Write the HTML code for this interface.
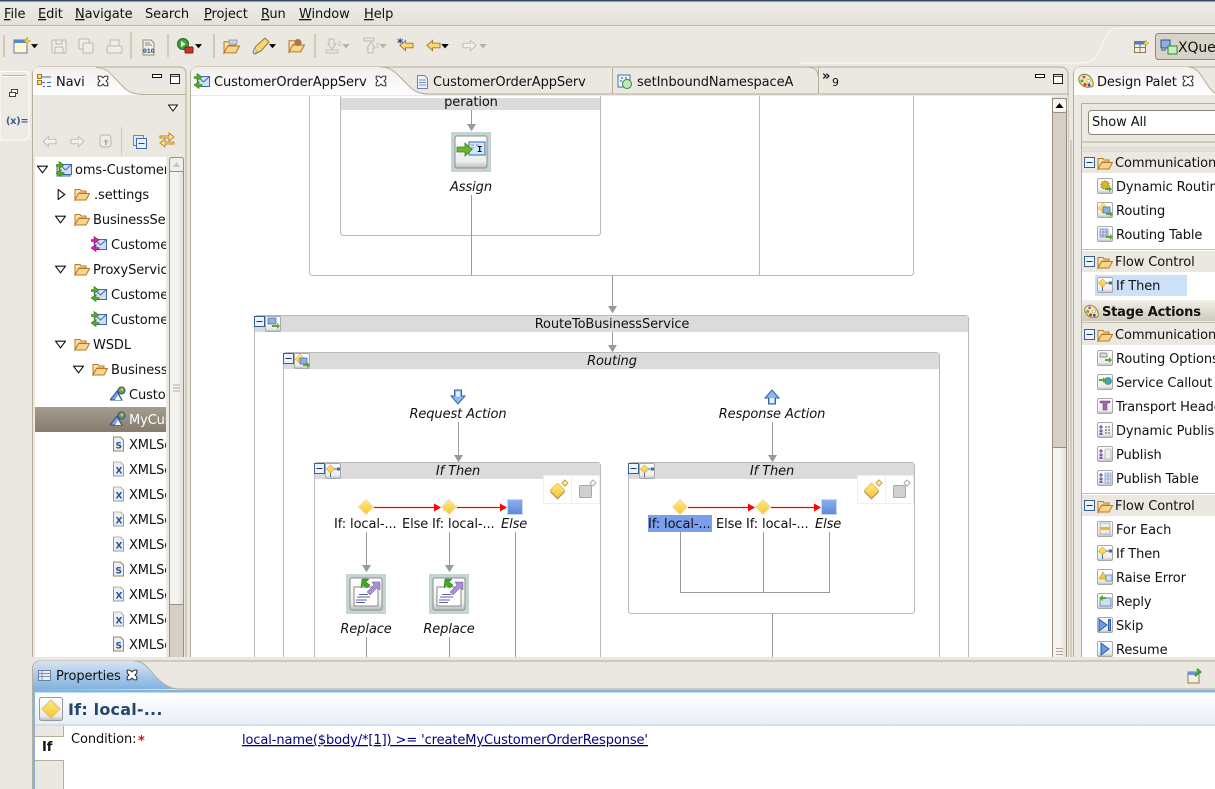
<!DOCTYPE html>
<html><head><meta charset="utf-8"><title>Workshop</title>
<style>
html,body{margin:0;padding:0;background:#ebe8e2;width:1215px;height:789px;overflow:hidden}
svg{display:block;font-family:"DejaVu Sans",sans-serif;font-size:13px;fill:#111;letter-spacing:-.1px}
text{white-space:pre}
.i{font-style:italic}
.u{text-decoration:underline}
.m{text-anchor:middle}
</style></head><body>
<svg xmlns="http://www.w3.org/2000/svg" width="1215" height="789" viewBox="0 0 1215 789">
<defs>
<linearGradient id="gm" x1="0" y1="0" x2="0" y2="1"><stop offset="0" stop-color="#eeece7"/><stop offset="1" stop-color="#e4e1da"/></linearGradient>
<linearGradient id="gt" x1="0" y1="0" x2="0" y2="1"><stop offset="0" stop-color="#f1efeb"/><stop offset="1" stop-color="#fff"/></linearGradient>
<linearGradient id="gs" x1="0" y1="0" x2="0" y2="1"><stop offset="0" stop-color="#a59c8e"/><stop offset="1" stop-color="#857c6e"/></linearGradient>
<linearGradient id="gb" x1="0" y1="0" x2="0" y2="1"><stop offset="0" stop-color="#d5e4f3"/><stop offset="1" stop-color="#7fb0de"/></linearGradient>
<linearGradient id="gw" x1="0" y1="0" x2="0" y2="1"><stop offset="0" stop-color="#fff"/><stop offset="1" stop-color="#e8eff7"/></linearGradient>
<linearGradient id="gh" x1="0" y1="0" x2="1" y2="0"><stop offset="0" stop-color="#f3f1ed"/><stop offset=".5" stop-color="#f7f5f2"/><stop offset="1" stop-color="#e2dfd8"/></linearGradient>
<linearGradient id="gd" x1="0" y1="0" x2="0" y2="1"><stop offset="0" stop-color="#ffe98a"/><stop offset="1" stop-color="#f7c531"/></linearGradient>
<linearGradient id="gq" x1="0" y1="0" x2="0" y2="1"><stop offset="0" stop-color="#8db1ee"/><stop offset="1" stop-color="#5c88d8"/></linearGradient>
<linearGradient id="gbtn" x1="0" y1="0" x2="0" y2="1"><stop offset="0" stop-color="#fff"/><stop offset=".8" stop-color="#ececec"/><stop offset="1" stop-color="#bbb"/></linearGradient>
<linearGradient id="gsa" x1="0" y1="0" x2="0" y2="1"><stop offset="0" stop-color="#f2efe9"/><stop offset="1" stop-color="#cfc9bc"/></linearGradient>
<clipPath id="cn"><rect x="35" y="157" width="131" height="500"/></clipPath>
<clipPath id="cp"><rect x="1082" y="140" width="133" height="517"/></clipPath>
<clipPath id="cd"><rect x="190" y="96" width="861" height="561"/></clipPath>
<symbol id="folder" viewBox="0 0 16 16"><path d="M1 3.500h5l1 1.500h5v2H5L1 14z" fill="#fbe3b0" stroke="#b37a25"/><path d="M1 14l3.500-6.500H15.500L12 14z" fill="#fad48b" stroke="#b37a25"/></symbol>
<symbol id="mailg" viewBox="0 0 16 16"><rect x="3.500" y="3.500" width="12" height="10" fill="#cfe0f6" stroke="#3f66a8"/><path d="M3.500 3.500l6 5.500 6-5.500" fill="none" stroke="#3f66a8"/><path d="M0 3.500h3V0.500L8 4 3 7.500V5.500H0z" fill="#5aa82b" stroke="#2f7a18" stroke-width=".6"/><path d="M8 11.500H5V8.500L0 12 5 15.500V13.500h3z" fill="#5aa82b" stroke="#2f7a18" stroke-width=".6"/></symbol>
<symbol id="mailm" viewBox="0 0 16 16"><rect x="3.500" y="3.500" width="12" height="10" fill="#cfe0f6" stroke="#3f66a8"/><path d="M3.500 3.500l6 5.500 6-5.500" fill="none" stroke="#3f66a8"/><path d="M0 3.500h3V0.500L8 4 3 7.500V5.500H0z" fill="#d025a8" stroke="#8a1070" stroke-width=".6"/><path d="M8 11.500H5V8.500L0 12 5 15.500V13.500h3z" fill="#d025a8" stroke="#8a1070" stroke-width=".6"/></symbol>
<symbol id="wsdl" viewBox="0 0 16 16"><path d="M0 14L7 5l5 9z" fill="#7d9fdb" stroke="#2b4f93"/><path d="M5 14l3-5 3 5z" fill="#fff"/><circle cx="11.500" cy="4.500" r="3.500" fill="#6da33f" stroke="#2b4f93"/><circle cx="12" cy="3.500" r="1.300" fill="#e8c93a"/></symbol>
<symbol id="fx" viewBox="0 0 16 16"><path d="M3.500 1h7l3 3v11h-10z" fill="#e9eff8" stroke="#8b9db8"/><path d="M3.500 1h7l3 3" fill="none" stroke="#c9b88a"/><text x="5.500" y="12.500" style="font:bold 9px 'DejaVu Sans'" fill="#2d4f8a">X</text></symbol>
<symbol id="fs" viewBox="0 0 16 16"><path d="M3.500 1h7l3 3v11h-10z" fill="#e9eff8" stroke="#a3884a"/><text x="5.500" y="12.500" style="font:bold 9px 'DejaVu Sans'" fill="#2d4f8a">S</text></symbol>
<symbol id="btn" viewBox="0 0 16 16"><rect x=".5" y=".5" width="15" height="15" rx="1.500" fill="url(#gbtn)" stroke="#a9a9a9"/></symbol>
<symbol id="minus" viewBox="0 0 11 11"><rect x=".5" y=".5" width="10" height="10" fill="#edf3fb" stroke="#3c5f93"/><path d="M2.500 5.500h6" stroke="#17365f" stroke-width="1"/></symbol>
<symbol id="ifi" viewBox="0 0 16 16"><path d="M5.500 2L9.500 6 5.500 10 1.500 6z" fill="url(#gd)" stroke="#d8a93a" stroke-width=".7"/><path d="M9 6h4M5.500 10v4" stroke="#3c6bb0"/><rect x="12" y="4.500" width="3" height="3" fill="#3c6bb0"/></symbol>
<symbol id="dia" viewBox="0 0 16 16"><path d="M8 .5L15.500 8 8 15.500.5 8z" fill="url(#gd)" stroke="#f3dfa6"/></symbol>
<symbol id="sq" viewBox="0 0 16 16"><rect x=".5" y=".5" width="15" height="15" fill="url(#gq)" stroke="#c8d8f2"/></symbol>
<symbol id="replace" viewBox="0 0 40 40"><rect width="40" height="40" fill="#c4d3d3"/><rect x="4" y="4" width="32" height="32" rx="2" fill="url(#gbtn)" stroke="#8d8d8d"/><rect x="8" y="13" width="24" height="19" fill="#fff" stroke="#888"/><path d="M11 23h13M10 26h11M10 28.500h9M13 20.500h9" stroke="#5a5fa8"/><path d="M16 5l7 0-3 3 4 3-3 3-4-3-2 3z" fill="#3da81f" stroke="#1e6f10" stroke-width=".5"/><path d="M34 8v8l-3-2-7 7-3-3 7-7-2-3z" fill="#a98fd0" stroke="#70559a" stroke-width=".5"/></symbol>
<symbol id="assign" viewBox="0 0 40 40"><rect width="40" height="40" fill="#c4d3d3"/><rect x="4" y="4" width="32" height="32" rx="2" fill="url(#gbtn)" stroke="#8d8d8d"/><rect x="18" y="10" width="16" height="13" fill="#d3e6fa" stroke="#2c6fb6"/><path d="M20 13h3M25 13h3M20 16h3" stroke="#7a9cc4"/><text x="26" y="20" style="font:bold 9px 'Liberation Mono'" fill="#111">I</text><path d="M6 15h8v-4l7 6.500-7 6.500v-4H6z" fill="#6cb52e" stroke="#3e8316" stroke-width=".8"/></symbol>
<symbol id="xb" viewBox="0 0 10 10"><path d="M1 1h2.500L5 2.500 6.500 1H9v2.500L7.500 5 9 6.500V9H6.500L5 7.500 3.500 9H1V6.500L2.500 5 1 3.500z" fill="#fff" stroke="#222" stroke-width=".8"/></symbol>
<symbol id="palette" viewBox="0 0 16 16"><path d="M2 3c3-3 8-2 11 2s3 9 0 9-5 1-8-1S-1 6 2 3z" fill="#f4e8a4" stroke="#8e7b2c"/><circle cx="6" cy="4" r="1.500" fill="#b04bc9"/><circle cx="4" cy="8" r="1.500" fill="#3fae2d"/><circle cx="7" cy="11.500" r="1.500" fill="#e02020"/><circle cx="11" cy="12" r="1.500" fill="#2050d8"/><circle cx="10.500" cy="8" r="1.700" fill="#fff" stroke="#8e7b2c" stroke-width=".5"/></symbol>
<symbol id="tri" viewBox="0 0 10 10"><path d="M.5 2h9L5 8z" fill="#fff" stroke="#111"/></symbol>
<symbol id="trr" viewBox="0 0 10 10"><path d="M2 .5v9L8 5z" fill="#fff" stroke="#111"/></symbol>
<symbol id="smin" viewBox="0 0 10 4"><rect x=".5" y=".5" width="9" height="3" fill="#fff" stroke="#111"/></symbol>
<symbol id="smax" viewBox="0 0 11 11"><rect x=".5" y=".5" width="10" height="10" fill="#fff" stroke="#111"/><path d="M.5 2.500h10" stroke="#111"/></symbol>
<symbol id="arrg" viewBox="0 0 10 10"><path d="M0 0h10L5 8z" fill="#999"/></symbol>
<symbol id="dn" viewBox="0 0 6 4"><path d="M0 0h6L3 3.500z" fill="#000"/></symbol>
<symbol id="dng" viewBox="0 0 6 4"><path d="M0 0h6L3 3.500z" fill="#b5b2ab"/></symbol>
<symbol id="ad" viewBox="0 0 16 16"><path d="M4.500 1h7v6H15L8 15 1 7h3.500z" fill="#8fb6ee" stroke="#2f62b3"/><path d="M6 2.500h4v5h-4z" fill="#e6f0fd"/></symbol>
<symbol id="au" viewBox="0 0 16 16"><path d="M4.500 15h7V9H15L8 1 1 9h3.500z" fill="#8fb6ee" stroke="#2f62b3"/><path d="M6 9h4v5h-4z" fill="#e6f0fd"/></symbol>
<symbol id="larrow" viewBox="0 0 16 14"><path d="M1 7l6-5.500V4.500h8v5H7v3z" fill="#fbd67b" stroke="#a97818"/></symbol>
<symbol id="larrowg" viewBox="0 0 16 14"><path d="M1 7l6-5.500V4.500h8v5H7v3z" fill="#f2f0ec" stroke="#bdb9b0"/></symbol>
<symbol id="rarrowg" viewBox="0 0 16 14"><path d="M15 7L9 1.500V4.500H1v5h8v3z" fill="#f2f0ec" stroke="#bdb9b0"/></symbol>
</defs>

<!-- background -->
<rect width="1215" height="789" fill="#ebe8e2"/>
<rect y="0" width="1215" height="26" fill="url(#gm)"/>
<rect y="0" width="1215" height="1.500" fill="#2d4a62"/>
<rect y="25" width="1215" height="1" fill="#bfb8a8"/>

<!-- menu -->
<text x="4" y="18"><tspan class="u">F</tspan>ile</text>
<text x="38" y="18"><tspan class="u">E</tspan>dit</text>
<text x="75" y="18"><tspan class="u">N</tspan>avigate</text>
<text x="145" y="18">Search</text>
<text x="204" y="18"><tspan class="u">P</tspan>roject</text>
<text x="261" y="18"><tspan class="u">R</tspan>un</text>
<text x="299" y="18"><tspan class="u">W</tspan>indow</text>
<text x="364" y="18"><tspan class="u">H</tspan>elp</text>

<!-- toolbar -->
<g fill="none" stroke="#c6bfb0" stroke-width="1.500">
<path d="M4 35v22M131 32v27M168 34v23M214 34v24M315 34v24"/>
</g>
<rect x="14" y="40" width="13" height="13" fill="#fdf7d8" stroke="#5d7aa8"/><path d="M14 40h13v3H14z" fill="#5d86c4"/><path d="M27 37l1 3 3 1-3 1-1 3-1-3-3-1 3-1z" fill="#f6c936" stroke="#b48a1a" stroke-width=".4"/>
<use href="#dn" x="31" y="44" width="7" height="5"/>
<g fill="#efedE8" stroke="#bcb8ae"><rect x="52" y="40" width="14" height="13" rx="1"/><rect x="56" y="40" width="6" height="4"/><rect x="55" y="47" width="8" height="6"/><rect x="79" y="39" width="10" height="10" rx="1"/><rect x="83" y="43" width="10" height="10" rx="1"/><rect x="107" y="46" width="15" height="7" rx="1"/><rect x="110" y="40" width="9" height="6"/></g>
<path d="M143 40h8l3 3v12h-11z" fill="#f2ede0" stroke="#9a8b62"/><path d="M145 43h5M145 45h7" stroke="#6d88b4"/><text x="143" y="53" style="font:bold 6.500px 'Liberation Mono'" fill="#274d86">010</text>
<circle cx="183" cy="44" r="5.500" fill="#3fa23a" stroke="#1e6a1d"/><path d="M181 41l4.500 3-4.500 3z" fill="#fff"/><rect x="185" y="47" width="8" height="6" rx="1" fill="#c8352c" stroke="#7d1a14"/><use href="#dn" x="195" y="44" width="7" height="5"/>
<use href="#folder" x="223" y="38" width="17" height="17"/><rect x="229" y="40" width="8" height="4" fill="#c6d4ea" stroke="#6a7fa3" stroke-width=".6"/>
<path d="M253 52l3-6 9-8 4 4-8 9-6 3z" fill="#f3d67a" stroke="#9a7a25"/><path d="M254 48l4 4-5 2z" fill="#d5d5d5" stroke="#777" stroke-width=".5"/><use href="#dn" x="269" y="44" width="7" height="5"/>
<use href="#folder" x="288" y="37" width="17" height="17"/><circle cx="298" cy="42.500" r="3.500" fill="#a9744a"/>
<g fill="none" stroke="#c0bcb3"><path d="M329 39h5v5h2l-4 5-4-5h1zM326 50h12v3h-12zM338 42h3M338 45h3"/><path d="M368 53h5v-5h2l-4-6-4 6h1zM364 38h10v3h-10zM376 44h3M376 47h3"/></g>
<use href="#dng" x="342" y="44" width="8" height="5"/><use href="#dng" x="379" y="44" width="8" height="5"/>
<use href="#larrow" x="399" y="39" width="15" height="13"/><text x="397" y="47" style="font:bold 12px 'DejaVu Sans'" fill="#2244a8">*</text>
<use href="#larrow" x="426" y="39" width="15" height="13"/><use href="#dn" x="441" y="44" width="8" height="5"/>
<use href="#rarrowg" x="462" y="39" width="15" height="13"/><use href="#dng" x="479" y="44" width="8" height="5"/>

<!-- perspective switcher -->
<path d="M1078 63c14 0 17-3 23-15 6-14 8-20 17-20H1215V63z" fill="#ece9e3"/>
<path d="M800 63H1078c14 0 17-3 23-15 6-14 8-20 17-20H1215" fill="none" stroke="#fbfaf8" stroke-width="1"/>
<g transform="translate(1134,40)"><rect x=".5" y="1.500" width="11" height="11" fill="#f5f0e1" stroke="#8c7a50"/><path d="M.5 1.500h11v3H.5z" fill="#4f7cc4"/><path d="M.5 7.500h11M6 4.500v8" stroke="#8c7a50"/><path d="M12 0l1 2 2 1-2 1-1 2-1-2-2-1 2-1z" fill="#f4cf50" stroke="#a8851a" stroke-width=".4"/></g>
<rect x="1155.500" y="33.500" width="70" height="26" rx="3" fill="#d8d3c9" stroke="#8f8879"/>
<rect x="1161" y="40" width="9" height="8" fill="#8fb0e0" stroke="#23509a"/><rect x="1168" y="46" width="9" height="8" fill="#cbecc3" stroke="#2c8a30"/><path d="M1161 50h5" stroke="#23509a"/>
<text x="1178" y="52" style="font-size:14px">XQuery</text>

<!-- fast view -->
<path d="M0 71.500H26a3 3 0 0 1 3 3V135a5 5 0 0 1-5 5H0z" fill="#ede9e3" stroke="#fff"/>
<path d="M2 75.500h24" stroke="#bdb6a7"/><path d="M2 76.500h24" stroke="#fff"/>
<rect x="11.500" y="89.500" width="6" height="4" fill="#fff" stroke="#444"/><rect x="9.500" y="92.500" width="6" height="4" fill="#fff" stroke="#444"/>
<text x="6" y="124" style="font:bold 9.500px 'DejaVu Sans'" fill="#3a5a8a">(x)=</text>

<!-- Navigator panel -->
<path d="M32.500 658V74a7 7 0 0 1 7-7H180a6 6 0 0 1 6 6V658" fill="#ebe8e2" stroke="#b6ad9b"/>
<path d="M33 95V72a5 5 0 0 1 5-5H96c12 0 16 8 24 16 7 8 12 12 25 12z" fill="url(#gt)"/>
<path d="M96 67.500c12 0 16 8 24 16 7 8 12 11 25 11h41" fill="none" stroke="#b6ad9b"/>
<g transform="translate(37,74)"><path d="M.5.500h4v4h-4zM.5 6.500h4v4h-4z" fill="#f9d67f" stroke="#a8791f"/><path d="M5 3h9M5 8.500h3M10 8.500h4M10 12.500h4M6 12.500h2" stroke="#3c6aa8"/></g>
<text x="56" y="86">Navi</text>
<use href="#xb" x="97" y="75" width="12" height="12"/>
<use href="#smin" x="152" y="74" width="10" height="4"/>
<use href="#smax" x="170" y="74" width="10" height="10"/>
<use href="#tri" x="168" y="103" width="10" height="10"/>
<use href="#larrowg" x="42" y="135" width="15" height="13"/>
<use href="#rarrowg" x="70" y="135" width="15" height="13"/>
<rect x="100" y="135" width="11" height="12" rx="3" fill="#eeece8" stroke="#b9b5ad"/><path d="M106 139l-3 3h2v3h2v-3h2z" fill="#b9b5ad"/>
<path d="M121.500 127v28" stroke="#cfcabe"/>
<rect x="133.500" y="135.500" width="10" height="10" fill="#dfe9f5" stroke="#6b8bb4"/><rect x="136.500" y="138.500" width="10" height="10" fill="#e8f0fa" stroke="#3e6ca8"/><path d="M138.500 143.500h6" stroke="#21497e"/>
<path d="M160 137h9v-3l5 4-5 4v-3h-9z M174 143h-9v-3l-5 4 5 4v-3h9z" transform="translate(0,-1)" fill="#f9e6ad" stroke="#c08a1e"/>

<rect x="35" y="157" width="131" height="500" fill="#fff"/>
<g clip-path="url(#cn)">
<rect x="35" y="407" width="131" height="25" fill="url(#gs)"/>
<use href="#tri" x="37" y="164" width="11" height="11"/>
<use href="#trr" x="56" y="189" width="11" height="11"/>
<use href="#tri" x="55" y="214" width="11" height="11"/>
<use href="#tri" x="55" y="264" width="11" height="11"/>
<use href="#tri" x="55" y="339" width="11" height="11"/>
<use href="#tri" x="73" y="364" width="11" height="11"/>
<rect x="57" y="166" width="13" height="10" fill="#fbd98f" stroke="#3b6fb0"/><use href="#mailg" x="56" y="161" width="16" height="16"/>
<use href="#folder" x="74" y="186" width="16" height="16"/>
<use href="#folder" x="74" y="211" width="16" height="16"/>
<use href="#mailm" x="91" y="236" width="16" height="16"/>
<use href="#folder" x="74" y="261" width="16" height="16"/>
<use href="#mailg" x="91" y="286" width="16" height="16"/>
<use href="#mailg" x="91" y="311" width="16" height="16"/>
<use href="#folder" x="74" y="336" width="16" height="16"/>
<use href="#folder" x="92" y="361" width="16" height="16"/>
<use href="#wsdl" x="110" y="386" width="16" height="16"/>
<use href="#wsdl" x="110" y="411" width="16" height="16"/>
<use href="#fs" x="110" y="436" width="16" height="16"/>
<use href="#fx" x="110" y="461" width="16" height="16"/>
<use href="#fx" x="110" y="486" width="16" height="16"/>
<use href="#fx" x="110" y="511" width="16" height="16"/>
<use href="#fx" x="110" y="536" width="16" height="16"/>
<use href="#fs" x="110" y="561" width="16" height="16"/>
<use href="#fx" x="110" y="586" width="16" height="16"/>
<use href="#fx" x="110" y="611" width="16" height="16"/>
<use href="#fs" x="110" y="636" width="16" height="16"/>
<text x="75" y="174">oms-Customer</text>
<text x="94" y="199">.settings</text>
<text x="93" y="224">BusinessServices</text>
<text x="111" y="249">Customer</text>
<text x="93" y="274">ProxyServices</text>
<text x="111" y="299">Customer</text>
<text x="111" y="324">Customer</text>
<text x="93" y="349">WSDL</text>
<text x="111" y="374">Business</text>
<text x="129" y="399">Customer</text>
<text x="129" y="424" fill="#fff" style="fill:#fff">MyCustomer</text>
<text x="129" y="449">XMLSchema</text>
<text x="129" y="474">XMLSchema</text>
<text x="129" y="499">XMLSchema</text>
<text x="129" y="524">XMLSchema</text>
<text x="129" y="549">XMLSchema</text>
<text x="129" y="574">XMLSchema</text>
<text x="129" y="599">XMLSchema</text>
<text x="129" y="624">XMLSchema</text>
<text x="129" y="649">XMLSchema</text>
</g>
<!-- nav scrollbar -->
<rect x="166" y="157" width="19" height="500" fill="#ebe8e2"/>
<rect x="169.500" y="157.500" width="14" height="14" rx="2" fill="#f0eeea" stroke="#9a917f"/>
<path d="M173 167h7l-3.500-5z" fill="#c9c5bc"/>
<rect x="169.500" y="171.500" width="14" height="433" fill="url(#gh)" stroke="#9a917f"/>
<rect x="170" y="605" width="13.500" height="52" fill="#d5d0c6"/>
<path d="M169.500 604v53M183.500 604v53" stroke="#9a917f"/>
<path d="M173 385h7M173 388h7M173 391h7" stroke="#b0a999"/>

<!-- Editor panel -->
<path d="M190.500 658V74a7 7 0 0 1 7-7H1061a7 7 0 0 1 7 7V658" fill="#ebe8e2" stroke="#b6ad9b"/>
<path d="M191 95V73a6 6 0 0 1 6-6H380c12 0 16 6 25 15 8 9 13 13 24 13z" fill="url(#gt)"/>
<path d="M380 67c12 0 16 6 25 15 8 9 13 12 24 12H1068" fill="none" stroke="#b6ad9b"/>
<path d="M612.500 68v26M818.500 68v26" stroke="#b6ad9b"/>
<path d="M805 67c10 0 13 3 13 9" fill="none" stroke="#b6ad9b"/>
<use href="#mailg" x="194" y="73" width="16" height="16"/>
<text x="214" y="86">CustomerOrderAppServ</text>
<use href="#xb" x="375" y="75" width="12" height="12"/>
<path d="M417.500 75.500h7l3 3v10h-10z" fill="#eef3fa" stroke="#6d83a8"/><path d="M419 80h7M419 82.500h7M419 85h7" stroke="#6d8ec0"/>
<text x="433" y="86">CustomerOrderAppServ</text>
<rect x="618" y="75" width="12" height="12" fill="#eef3fa" stroke="#3d74b0"/><circle cx="627" cy="84" r="4.500" fill="#bfe6c0" stroke="#2c8a30"/><path d="M621 78h2M625 78h2M620 81h2" stroke="#23509a"/>
<text x="637" y="86">setInboundNamespaceA</text>
<text x="822" y="80" style="font:bold 13px 'DejaVu Sans'">&#187;</text>
<text x="832" y="86" style="font-size:11px">9</text>
<use href="#smin" x="1035" y="74" width="10" height="4"/>
<use href="#smax" x="1053" y="74" width="10" height="10"/>

<!-- canvas -->
<rect x="191" y="96" width="861" height="562" fill="#fff"/>
<!-- editor scrollbar -->
<rect x="1052" y="96" width="16" height="562" fill="#ebe8e2"/>
<rect x="1052.500" y="113" width="14" height="335" fill="#d5d0c6"/>
<rect x="1052.500" y="98.500" width="14" height="14" rx="2" fill="#f7f6f3" stroke="#968d7b"/>
<path d="M1055.500 108h8l-4-5z" fill="#000"/>
<rect x="1052.500" y="448" width="14" height="210" fill="url(#gh)"/>
<path d="M1052.500 98v560M1066.500 98v560" stroke="#968d7b"/>
<path d="M1052.500 447.500h14" stroke="#968d7b"/>
<path d="M1056 648.500h7M1056 651.500h7M1056 654.500h7" stroke="#b0a999"/>

<g clip-path="url(#cd)" >
<g fill="none" stroke="#b9b9b9">
<path d="M309.500 96V272.500a3 3 0 0 0 3 3H910.500a3 3 0 0 0 3-3V96"/>
<path d="M340.500 96V232.500a3 3 0 0 0 3 3H597.500a3 3 0 0 0 3-3V96"/>
<path d="M759.500 96V275"/>
</g>
<rect x="341" y="98" width="259" height="12" fill="#dbdbdb"/>
<text x="471" y="106" class="m">peration</text>
<path d="M471.500 110v16M471.500 195v80M612.500 275v33" stroke="#999"/>
<use href="#arrg" x="467" y="124" width="9" height="9"/>
<use href="#assign" x="451" y="132" width="40" height="40"/>
<text x="471" y="191" class="i m">Assign</text>
<use href="#arrg" x="608" y="306" width="9" height="9"/>

<!-- RouteTo -->
<path d="M254.500 658V318.500a3 3 0 0 1 3-3H965.500a3 3 0 0 1 3 3V658" fill="#fff" stroke="#b9b9b9"/>
<rect x="255" y="316" width="713" height="16" fill="#dbdbdb"/>
<text x="612" y="328" class="m">RouteToBusinessService</text>
<use href="#minus" x="254" y="316" width="11" height="11"/>
<use href="#btn" x="265" y="316" width="16" height="16"/>
<rect x="268" y="318" width="8" height="6" fill="#8fb0e0" stroke="#2c5ca8" stroke-width=".6"/><path d="M272 325h5v-2l3 3-3 3v-2h-5z" fill="#58a82b"/>

<!-- Routing -->
<path d="M283.500 658V355.500a3 3 0 0 1 3-3H936.500a3 3 0 0 1 3 3V658" fill="#fff" stroke="#b9b9b9"/>
<rect x="284" y="353" width="655" height="16" fill="#dbdbdb"/>
<text x="612" y="365" class="i m">Routing</text>
<use href="#minus" x="283" y="353" width="11" height="11"/>
<use href="#btn" x="294" y="353" width="16" height="16"/>
<path d="M295 359l5-5 5 5-5 5z" fill="url(#gd)" stroke="#d8a93a" stroke-width=".5"/><rect x="300" y="358" width="7" height="6" fill="#8fb0e0" stroke="#2c5ca8" stroke-width=".6"/><path d="M303 364h4v-2l3 3-3 3v-2h-4z" fill="#58a82b"/>

<path d="M612.500 332v15" stroke="#999"/>
<use href="#arrg" x="608" y="345" width="9" height="9"/>

<use href="#ad" x="450" y="389" width="16" height="16"/>
<text x="458" y="418" class="i m">Request Action</text>
<use href="#au" x="764" y="389" width="16" height="16"/>
<text x="772" y="418" class="i m">Response Action</text>
<path d="M458.500 422v33M772.500 422v33" stroke="#999"/>
<use href="#arrg" x="454" y="455" width="9" height="9"/>
<use href="#arrg" x="768" y="455" width="9" height="9"/>

<!-- If Then left -->
<path d="M314.500 658V465.500a3 3 0 0 1 3-3H597.500a3 3 0 0 1 3 3V658" fill="#fff" stroke="#b9b9b9"/>
<rect x="315" y="463" width="285" height="16" fill="#dbdbdb"/>
<text x="458" y="475" class="i m">If Then</text>
<use href="#minus" x="314" y="463" width="11" height="11"/>
<use href="#btn" x="325" y="463" width="16" height="16"/><use href="#ifi" x="325" y="463" width="16" height="16"/>
<rect x="543.500" y="475.500" width="28" height="28" fill="#fff" stroke="#eee"/><rect x="571.500" y="475.500" width="28" height="28" fill="#fff" stroke="#eee"/>
<path d="M557.500 483.500l7.500 7.500-7.500 7.500-7.500-7.500z" fill="#8d8d7d" transform="translate(0,1)"/>
<path d="M557.500 483l7.500 7.500-7.500 7.500-7.500-7.500z" fill="url(#gd)" stroke="#d8a93a" stroke-width=".6"/><path d="M565 480l3 3-3 3-3-3z" fill="#fbe8a8" stroke="#c9a32c"/>
<rect x="579.500" y="485.500" width="12" height="12" rx="1" fill="#d0d0d0" stroke="#a8a8a8"/><path d="M593 480l3 3-3 3-3-3z" fill="#fff" stroke="#aaa"/>
<path d="M374 507.500h62M457 507.500h45" stroke="#f00" stroke-width="1.300"/>
<path d="M434 503.500l7 4-7 4zM500 503.500l7 4-7 4z" fill="#f00"/>
<use href="#dia" x="358" y="499" width="16" height="16"/>
<use href="#dia" x="441" y="499" width="16" height="16"/>
<use href="#sq" x="507" y="499" width="16" height="16"/>
<text x="334" y="528">If: local-...</text>
<text x="402" y="528">Else</text>
<text x="432" y="528">If: local-...</text>
<text x="501" y="528" class="i">Else</text>
<path d="M366.500 532v36M449.500 532v36M515.500 532v126M366.500 637v21M449.500 637v21" stroke="#999"/>
<use href="#arrg" x="362" y="565" width="9" height="9"/>
<use href="#arrg" x="445" y="565" width="9" height="9"/>
<use href="#replace" x="346" y="574" width="40" height="40"/>
<use href="#replace" x="429" y="574" width="40" height="40"/>
<text x="366" y="633" class="i m">Replace</text>
<text x="449" y="633" class="i m">Replace</text>

<!-- If Then right -->
<path d="M628.500 465.500a3 3 0 0 1 3-3H911.500a3 3 0 0 1 3 3V610.500a3 3 0 0 1-3 3H631.500a3 3 0 0 1-3-3z" fill="#fff" stroke="#b9b9b9"/>
<rect x="629" y="463" width="285" height="16" fill="#dbdbdb"/>
<text x="772" y="475" class="i m">If Then</text>
<use href="#minus" x="628" y="463" width="11" height="11"/>
<use href="#btn" x="639" y="463" width="16" height="16"/><use href="#ifi" x="639" y="463" width="16" height="16"/>
<rect x="857.500" y="475.500" width="28" height="28" fill="#fff" stroke="#eee"/><rect x="885.500" y="475.500" width="28" height="28" fill="#fff" stroke="#eee"/>
<path d="M871.500 483.500l7.500 7.500-7.500 7.500-7.500-7.500z" fill="#8d8d7d" transform="translate(0,1)"/>
<path d="M871.500 483l7.500 7.500-7.500 7.500-7.500-7.500z" fill="url(#gd)" stroke="#d8a93a" stroke-width=".6"/><path d="M879 480l3 3-3 3-3-3z" fill="#fbe8a8" stroke="#c9a32c"/>
<rect x="893.500" y="485.500" width="12" height="12" rx="1" fill="#d0d0d0" stroke="#a8a8a8"/><path d="M907 480l3 3-3 3-3-3z" fill="#fff" stroke="#aaa"/>
<path d="M688 507.500h62M771 507.500h45" stroke="#f00" stroke-width="1.300"/>
<path d="M748 503.500l7 4-7 4zM814 503.500l7 4-7 4z" fill="#f00"/>
<use href="#dia" x="672" y="499" width="16" height="16"/>
<use href="#dia" x="755" y="499" width="16" height="16"/>
<use href="#sq" x="821" y="499" width="16" height="16"/>
<rect x="648" y="515" width="64" height="17" fill="#7b9fea"/>
<text x="648" y="528">If: local-...</text>
<text x="716" y="528">Else</text>
<text x="746" y="528">If: local-...</text>
<text x="815" y="528" class="i">Else</text>
<path d="M680.500 532v60.500H829.500V532M763.500 532v60M772.500 614v44" fill="none" stroke="#999"/>
</g>

<!-- Palette panel -->
<path d="M1073.500 658V74a7 7 0 0 1 7-7H1215" fill="#ebe8e2" stroke="#b6ad9b"/>
<path d="M1074 95V73a6 6 0 0 1 6-6h108c8 0 12 6 17 14 5 8 8 13 14 14z" fill="url(#gt)"/>
<path d="M1188 67c8 0 12 6 17 14 4 6 6 10 10 12" fill="none" stroke="#b6ad9b"/>
<use href="#palette" x="1078" y="73" width="16" height="16"/>
<text x="1097" y="86">Design Palet</text>
<use href="#xb" x="1182" y="75" width="12" height="12"/>
<path d="M1081.500 103.500H1215M1081.500 103.500V142H1215" fill="none" stroke="#b6ad9b"/>
<rect x="1088.500" y="110.500" width="140" height="24" rx="3" fill="#fff" stroke="#8c8372"/>
<text x="1092" y="126">Show All</text>
<path d="M1081 148h134M1081 151h134" stroke="#d5d0c6"/>
<rect x="1082" y="152" width="133" height="505" fill="#fff"/>
<g clip-path="url(#cp)">
<rect x="1082" y="152" width="133" height="21" fill="#ebe8e2"/>
<rect x="1082" y="251" width="133" height="21" fill="#ebe8e2"/><path d="M1082 249.500h133" stroke="#c6c0b3"/>
<rect x="1082" y="300" width="133" height="21" fill="url(#gsa)"/>
<rect x="1082" y="321" width="133" height="3" fill="#ebe8e2"/><path d="M1082 322.500h133" stroke="#c6c0b3"/>
<rect x="1082" y="324" width="133" height="21" fill="#ebe8e2"/>
<rect x="1082" y="495" width="133" height="21" fill="#ebe8e2"/><path d="M1082 493.500h133" stroke="#c6c0b3"/>
<rect x="1095" y="275" width="92" height="21" fill="#cce0f8"/>
<use href="#minus" x="1084" y="157" width="11" height="11"/><use href="#folder" x="1097" y="155" width="16" height="16"/>
<use href="#minus" x="1084" y="256" width="11" height="11"/><use href="#folder" x="1097" y="254" width="16" height="16"/>
<use href="#minus" x="1084" y="329" width="11" height="11"/><use href="#folder" x="1097" y="327" width="16" height="16"/>
<use href="#minus" x="1084" y="500" width="11" height="11"/><use href="#folder" x="1097" y="498" width="16" height="16"/>
<use href="#palette" x="1084" y="304" width="15" height="15"/>
<g>
<use href="#btn" x="1097" y="178" width="16" height="16"/><circle cx="1105" cy="185" r="4" fill="#dcb52e" stroke="#8a6c17" stroke-dasharray="1.500 1"/><path d="M1105 188h4v-2l3 3-3 3v-2h-4z" fill="#58a82b"/>
<use href="#btn" x="1097" y="202" width="16" height="16"/><path d="M1098 208l5-5 5 5-5 5z" fill="url(#gd)" stroke="#d8a93a" stroke-width=".5"/><rect x="1103" y="207" width="7" height="6" fill="#8fb0e0" stroke="#2c5ca8" stroke-width=".6"/><path d="M1106 213h4v-2l3 3-3 3v-2h-4z" fill="#58a82b"/>
<use href="#btn" x="1097" y="226" width="16" height="16"/><path d="M1100 229h8v8h-8zM1103 229v8M1106 229v8M1100 232h8M1100 235h8" fill="#dfe6f5" stroke="#6a7fb5" stroke-width=".7"/><path d="M1106 236h4v-2l3 3-3 3v-2h-4z" fill="#58a82b"/>
<use href="#btn" x="1097" y="277" width="16" height="16"/><use href="#ifi" x="1097" y="277" width="16" height="16"/>
<use href="#btn" x="1097" y="350" width="16" height="16"/><path d="M1100 353h6l1 1v3h-7z" fill="#ddd" stroke="#777" stroke-width=".7"/><path d="M1105 359h4v-2l3 3-3 3v-2h-4z" fill="#58a82b"/>
<use href="#btn" x="1097" y="374" width="16" height="16"/><circle cx="1108" cy="381" r="3.500" fill="#3fa8b0" stroke="#1c6d75" stroke-width=".6"/><path d="M1099 379h4v-2l3 3-3 3v-2h-4z" fill="#58a82b"/>
<use href="#btn" x="1097" y="398" width="16" height="16"/><path d="M1100 401h10v2h-3v7h-4v-7h-3z" fill="#a06aa8" stroke="#6a3a72" stroke-width=".5"/>
<use href="#btn" x="1097" y="422" width="16" height="16"/><path d="M1101 425v10M1099 427h4M1099 431h4M1099 434h4" stroke="#6a3aa0"/><path d="M1105 427h2M1108 427h2M1105 430h2M1108 430h2M1105 433h2M1108 433h2" stroke="#4a4a4a"/>
<use href="#btn" x="1097" y="446" width="16" height="16"/><path d="M1101 449v10M1099 451h4M1099 455h4M1099 458h4" stroke="#6a3aa0"/><path d="M1105 449h6v10h-6z" fill="#eee" stroke="#999" stroke-width=".6"/>
<use href="#btn" x="1097" y="470" width="16" height="16"/><path d="M1101 473v10M1099 475h4M1099 479h4M1099 482h4" stroke="#6a3aa0"/><path d="M1105 473h6v10h-6zM1105 476h6M1105 479h6M1108 473v10" fill="#dfe6f5" stroke="#6a7fb5" stroke-width=".6"/>
<use href="#btn" x="1097" y="521" width="16" height="16"/><rect x="1100" y="523" width="10" height="11" fill="#eee" stroke="#999" stroke-width=".7"/><rect x="1100" y="527" width="10" height="3" fill="#e4b93a"/>
<use href="#btn" x="1097" y="545" width="16" height="16"/><use href="#ifi" x="1097" y="545" width="16" height="16"/>
<use href="#btn" x="1097" y="569" width="16" height="16"/><path d="M1103 572l4 7h-8z" fill="#f4c83a" stroke="#a8851a" stroke-width=".5"/><rect x="1106" y="575" width="6" height="6" fill="#cfe0f6" stroke="#3f66a8" stroke-width=".6"/>
<use href="#btn" x="1097" y="593" width="16" height="16"/><rect x="1100" y="598" width="11" height="8" fill="#cfe0f6" stroke="#3f66a8" stroke-width=".7"/><path d="M1106 597h-3v-2l-4 3 4 3v-2h3z" fill="#58a82b"/>
<use href="#btn" x="1097" y="617" width="16" height="16"/><path d="M1099 619l8 6-8 6z" fill="#6a9ae8" stroke="#2c5ca8"/><rect x="1108.500" y="619.500" width="2" height="11" fill="#6a9ae8" stroke="#2c5ca8"/>
<use href="#btn" x="1097" y="641" width="16" height="16"/><path d="M1101 643l8 6-8 6z" fill="#6a9ae8" stroke="#2c5ca8"/>
</g>
<text x="1115" y="167">Communication</text>
<text x="1116" y="191">Dynamic Routing</text>
<text x="1116" y="215">Routing</text>
<text x="1116" y="239">Routing Table</text>
<text x="1115" y="266">Flow Control</text>
<text x="1116" y="290">If Then</text>
<text x="1102" y="316" style="font-weight:bold;letter-spacing:-.2px">Stage Actions</text>
<text x="1115" y="339">Communication</text>
<text x="1116" y="363">Routing Options</text>
<text x="1116" y="387">Service Callout</text>
<text x="1116" y="411">Transport Header</text>
<text x="1116" y="435">Dynamic Publish</text>
<text x="1116" y="459">Publish</text>
<text x="1116" y="483">Publish Table</text>
<text x="1115" y="510">Flow Control</text>
<text x="1116" y="534">For Each</text>
<text x="1116" y="558">If Then</text>
<text x="1116" y="582">Raise Error</text>
<text x="1116" y="606">Reply</text>
<text x="1116" y="630">Skip</text>
<text x="1116" y="654">Resume</text>
</g>
<path d="M1071 140v518M1073.500 140v518M1081.500 142v516" stroke="#b6ad9b" fill="none"/>

<!-- Properties panel -->
<rect x="0" y="657" width="1215" height="4" fill="#ebe8e2"/>
<path d="M32.500 789V668a7 7 0 0 1 7-7H1215" fill="#ebe8e2" stroke="#b6ad9b"/>
<path d="M33 690V668a7 7 0 0 1 7-7h94c10 0 14 7 22 16 8 9 14 12 24 12z" fill="url(#gb)"/>
<path d="M134 661c10 0 14 7 22 16 8 8 14 12 24 12H1215" fill="none" stroke="#b6ad9b"/>
<rect x="33" y="690" width="1182" height="2.500" fill="#85b4e0"/>
<rect x="33" y="692" width="2" height="97" fill="#85b4e0"/>
<rect x="38.500" y="670.500" width="12" height="10" fill="#e9eef6" stroke="#6b7f9c"/><path d="M38.500 673.500h12M38.500 676.500h12M42 670.500v10" stroke="#7f93b0"/>
<text x="56" y="680">Properties</text>
<use href="#xb" x="126" y="669" width="12" height="12"/>
<rect x="1188" y="672" width="11" height="11" fill="#f5f0e1" stroke="#8c7a50"/><path d="M1188 672h11v3h-11z" fill="#6c95d8"/><path d="M1195 676l5-5M1197 669l4 4" stroke="#3da81f" stroke-width="2.500"/>
<rect x="35" y="692.500" width="1180" height="31" fill="url(#gw)"/>
<rect x="35" y="724" width="1180" height="2" fill="#d2deea"/>
<rect x="39.500" y="697.500" width="23" height="23" rx="2" fill="url(#gbtn)" stroke="#999"/>
<path d="M51 700l9 9-9 9-9-9z" fill="url(#gd)" stroke="#e2bf6a"/>
<text x="68" y="715" style="font-weight:bold;font-size:16px;letter-spacing:.2px;fill:#25476a">If: local-...</text>
<rect x="35" y="726" width="1180" height="63" fill="#fff"/>
<rect x="35" y="726" width="28" height="11" fill="#ebe8e2"/>
<path d="M35 736.500h28.500V726" fill="none" stroke="#b6ad9b"/>
<rect x="35" y="760" width="28" height="29" fill="#ebe8e2"/>
<path d="M35 760.500h28.500V789" fill="none" stroke="#b6ad9b"/>
<text x="42" y="751" style="font-weight:bold">If</text>
<text x="71" y="743">Condition:</text>
<text x="138" y="745" style="font-weight:bold;fill:#f00">*</text>
<text x="242" y="744" class="u" style="fill:#000080">local-name($body/*[1]) &gt;= 'createMyCustomerOrderResponse'</text>
</svg>
</body></html>
